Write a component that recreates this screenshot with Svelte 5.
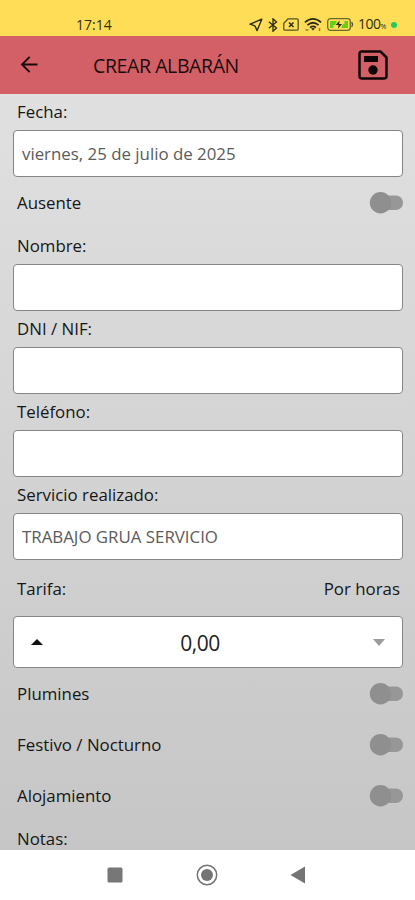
<script>
  let fields = $state([
    { id: 'nombre', label: 'Nombre:', value: '' },
    { id: 'dni', label: 'DNI / NIF:', value: '' },
    { id: 'telefono', label: 'Teléfono:', value: '' },
    { id: 'servicio', label: 'Servicio realizado:', value: 'TRABAJO GRUA SERVICIO' }
  ]);

  let extras = $state([
    { label: 'Plumines', on: false },
    { label: 'Festivo / Nocturno', on: false },
    { label: 'Alojamiento', on: false }
  ]);

  let fecha = $state('viernes, 25 de julio de 2025');
  let ausente = $state(false);
  let tarifa = $state(0);

  let importe = $derived(tarifa.toFixed(2).replace('.', ','));
</script>

{#snippet toggle(on, label, flip)}
  <button class="switch" class:on role="switch" aria-checked={on} aria-label={label} onclick={flip}>
    <svg width="34" height="22" viewBox="0 0 34 22">
      <rect x="8" y="3.500" width="26" height="14.500" rx="7.250" fill="#979797" />
      <circle cx="11.500" cy="10.800" r="10.700" fill="#8f8f8f" />
    </svg>
  </button>
{/snippet}

<div class="screen">
  <div class="status-bar">
    <span class="clock">17:14</span>
    <div class="status-icons">
      <svg width="14" height="14" viewBox="0 0 14 14" fill="none" stroke="#2b2a18" stroke-width="1.4" stroke-linejoin="round">
        <path d="M12.8 1.2 1 6.2l4.9 1.7 2.2 4.7z" />
      </svg>
      <svg class="bluetooth" width="10" height="14" viewBox="0 0 10 14" fill="none" stroke="#2b2a18" stroke-width="1.3">
        <path d="M.8 3.8 8.5 10 5 13.2V.8L8.5 4 .8 10.2" />
      </svg>
      <svg class="sim" width="16" height="13" viewBox="0 0 16 13" fill="none" stroke="#55522a" stroke-width="1.3">
        <path d="M5.2.8H14q1.2 0 1.2 1.2v9q0 1.2-1.2 1.2H2Q.8 12.200.8 11V5.200z" stroke-linejoin="round" />
        <path d="m6 4.500 4.500 4.500M10.500 4.500 6 9" stroke="#2b2a18" stroke-width="1.500" />
      </svg>
      <svg class="wifi" width="18" height="13" viewBox="0 0 18 13" fill="none" stroke="#2b2a18" stroke-width="1.700">
        <path d="M.9 4.400Q9-2.600 17.100 4.400M3.400 7.200Q9 2.300 14.600 7.200M6 9.700q3-2.500 6 0" />
        <path d="m7 10.600 2 2 2-2q-2-1.300-4 0z" fill="#2b2a18" stroke="none" />
        <path d="M1.500 12h3M15.500 10v3" stroke-width="1.500" opacity=".5" />
      </svg>
      <svg class="battery" width="27" height="13" viewBox="0 0 27 13">
        <rect x=".7" y=".7" width="22.600" height="11.600" rx="2.800" fill="none" stroke="#6b6a2c" stroke-width="1.300" />
        <path d="M24.500 4.200q2 2.300 0 4.600" fill="none" stroke="#55522a" stroke-width="1.300" />
        <path d="M3 3h7L8 7H6.500v3H3zM21 10h-7l2-4h1.500V3H21z" fill="#62d116" />
        <path d="m12.700 2.600-4.100 4.500h3l-.8 3.600 4.300-4.800h-3z" fill="#2b2a18" />
      </svg>
      <span class="percent">100<small>%</small></span>
      <span class="privacy-dot"></span>
    </div>
  </div>

  <header class="app-bar">
    <button class="icon-btn" aria-label="Volver">
      <svg width="18" height="18" viewBox="0 0 18 18" fill="none" stroke="#1c0b0d" stroke-width="1.900">
        <path d="M17.500 8.500H2.200M9.700 .8 2 8.500l7.700 7.700" />
      </svg>
    </button>
    <h1>CREAR ALBARÁN</h1>
    <button class="icon-btn" aria-label="Guardar">
      <svg width="30" height="30" viewBox="0 0 30 30">
        <path d="M4 1.500h18.500l6 6V26q0 2.500-2.500 2.500H4Q1.500 28.500 1.500 26V4Q1.500 1.500 4 1.500z" fill="none" stroke="#100506" stroke-width="2.500" stroke-linejoin="round" />
        <rect x="6" y="6" width="14" height="6" fill="#100506" />
        <circle cx="15" cy="20" r="4.700" fill="#100506" />
      </svg>
    </button>
  </header>

  <main class="form">
    <label class="label" for="fecha">Fecha:</label>
    <input class="box" id="fecha" bind:value={fecha} />

    <div class="row">
      <span>Ausente</span>
      {@render toggle(ausente, 'Ausente', () => (ausente = !ausente))}
    </div>

    {#each fields as field}
      <label class="label" for={field.id}>{field.label}</label>
      <input class="box" id={field.id} bind:value={field.value} />
    {/each}

    <div class="row rate">
      <span>Tarifa:</span>
      <span>Por horas</span>
    </div>
    <div class="stepper">
      <button aria-label="Subir" onclick={() => (tarifa += 1)}>
        <svg width="12" height="6" viewBox="0 0 12 6"><path d="M0 6 6 0l6 6z" fill="#111" /></svg>
      </button>
      <span class="amount">{importe}</span>
      <button aria-label="Bajar" disabled={tarifa === 0} onclick={() => (tarifa -= 1)}>
        <svg width="12" height="7" viewBox="0 0 12 7"><path d="M0 0h12L6 7z" fill="#9b9b9b" /></svg>
      </button>
    </div>

    {#each extras as extra}
      <div class="row">
        <span>{extra.label}</span>
        {@render toggle(extra.on, extra.label, () => (extra.on = !extra.on))}
      </div>
    {/each}

    <div class="label">Notas:</div>
  </main>

  <nav class="nav-bar">
    <svg width="16" height="16" viewBox="0 0 16 16"><rect x=".5" y=".5" width="15" height="15" rx="1.500" fill="#777" /></svg>
    <svg width="22" height="22" viewBox="0 0 22 22">
      <circle cx="11" cy="11" r="9.700" fill="none" stroke="#747474" stroke-width="1.500" />
      <circle cx="11" cy="11" r="6" fill="#747474" />
    </svg>
    <svg width="16" height="18" viewBox="0 0 16 18"><path d="M.5 9 15 .5v17z" fill="#747474" /></svg>
  </nav>
</div>

<style>
  .screen {
    width: 415px;
    height: 900px;
    display: flex;
    flex-direction: column;
    overflow: hidden;
    font-family: 'Open Sans', 'Noto Sans', sans-serif;
    font-size: 16.85px;
    color: #161616;
  }

  button {
    padding: 0;
    border: none;
    background: none;
    display: flex;
    align-items: center;
    justify-content: center;
  }

  .status-bar {
    height: 36px;
    flex: none;
    box-sizing: border-box;
    padding: 13px 18px 0 76px;
    display: flex;
    justify-content: space-between;
    align-items: center;
    background: #ffdd57;
    color: #2f2c18;
  }

  .clock {
    font-size: 14px;
    line-height: 22px;
  }

  .status-icons {
    display: flex;
    align-items: center;
  }

  .bluetooth {
    margin-left: 5px;
  }

  .sim {
    margin-left: 5px;
  }

  .wifi {
    margin-left: 5px;
  }

  .battery {
    margin-left: 5px;
  }

  .percent {
    width: 30px;
    margin-left: 4px;
    padding-top: 2px;
    font-size: 14px;
    line-height: 20px;
    letter-spacing: -0.5px;
    white-space: nowrap;
  }

  .percent small {
    font-size: 7px;
  }

  .privacy-dot {
    width: 6px;
    height: 6px;
    margin-left: 3px;
    border-radius: 50%;
    background: #1ccb62;
  }

  .app-bar {
    height: 58px;
    flex: none;
    box-sizing: border-box;
    padding: 0 27px 0 20px;
    display: flex;
    align-items: center;
    background: #d36066;
  }

  h1 {
    flex: 1;
    margin: 0 0 0 55px;
    font-size: 19.5px;
    font-weight: 400;
    letter-spacing: -0.4px;
    color: #1c0b0d;
  }

  .form {
    flex: 1;
    min-height: 0;
    overflow: hidden;
    padding: 0 12px 0 13px;
    background: linear-gradient(#e0e0e0, #c6c6c6);
  }

  .label {
    display: block;
    height: 36px;
    line-height: 36px;
    padding-left: 4px;
  }

  .box {
    display: block;
    width: 100%;
    height: 47px;
    box-sizing: border-box;
    padding: 1px 8px;
    border: 1px solid #868686;
    border-radius: 4px;
    background: #fff;
    font: inherit;
    color: #5b5b5b;
    outline: none;
  }

  .row {
    height: 51px;
    padding-left: 4px;
    display: flex;
    align-items: center;
    justify-content: space-between;
  }

  .rate {
    height: 56px;
    padding-right: 3px;
  }

  .switch {
    width: 34px;
    height: 22px;
  }

  .switch.on {
    transform: scaleX(-1);
  }

  .stepper {
    height: 52px;
    box-sizing: border-box;
    padding: 0 17px;
    display: flex;
    align-items: center;
    justify-content: space-between;
    border: 1px solid #868686;
    border-radius: 4px;
    background: #fff;
  }

  .amount {
    padding-top: 2px;
    margin-right: 16px;
    font-size: 21px;
    letter-spacing: -0.5px;
    color: #222;
  }

  .nav-bar {
    height: 50px;
    flex: none;
    box-sizing: border-box;
    padding: 0 109px 0 107px;
    display: flex;
    align-items: center;
    justify-content: space-between;
    background: #fff;
  }
</style>
